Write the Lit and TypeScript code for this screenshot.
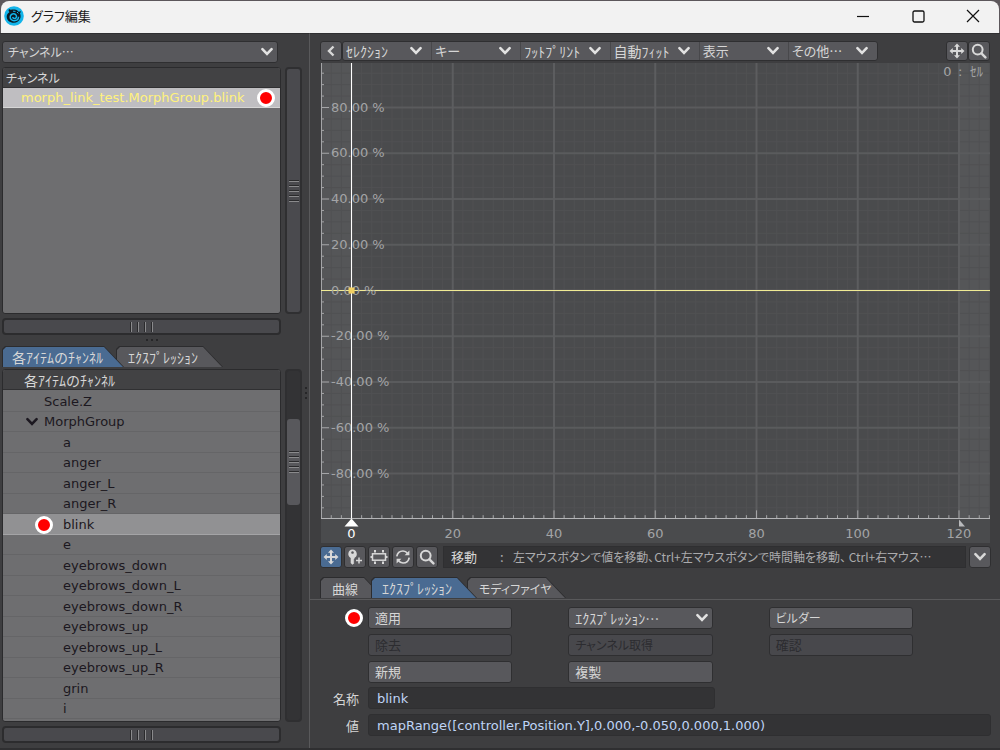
import { LitElement, html, svg, css } from "lit";
import { customElement, property } from "lit/decorators.js";

const chevron = html`<svg class="chev" viewBox="0 0 14 10" width="14" height="10" aria-hidden="true">
  <path d="M2.4 2.2 L7 6.8 L11.6 2.2" fill="none" stroke="currentColor" stroke-width="2.6" stroke-linecap="round"/></svg>`;

const moveIcon = html`<svg viewBox="0 0 16 16" width="16" height="16" aria-hidden="true">
  <path d="M8 0.5 L11 3.8 H5Z M8 15.5 L11 12.2 H5Z M0.5 8 L3.8 5 V11Z M15.5 8 L12.2 5 V11Z" fill="currentColor"/>
  <path d="M8 3V13M3 8H13" stroke="currentColor" stroke-width="2" fill="none"/></svg>`;

const searchIcon = html`<svg viewBox="0 0 16 16" width="16" height="16" aria-hidden="true">
  <circle cx="6.7" cy="6.6" r="4.9" fill="none" stroke="currentColor" stroke-width="2"/>
  <path d="M10.4 10.4L14.4 14.4" stroke="currentColor" stroke-width="2.4" stroke-linecap="round"/></svg>`;

const keyIcon = html`<svg viewBox="0 0 16 16" width="16" height="16" aria-hidden="true">
  <path fill-rule="evenodd" fill="currentColor" d="M5.5 0.6a4.4 4.4 0 0 1 1.9 8.3V10l-1 1 1 1-1 1.1 1 1-2 1.6-1.7-1.7V8.9A4.4 4.4 0 0 1 5.5 .6ZM5.5 2.2a1.3 1.3 0 1 0 .01 0Z"/>
  <path d="M12 8.6V14.6M9 11.6H15" stroke="currentColor" stroke-width="1.5"/></svg>`;

const stretchIcon = html`<svg viewBox="0 0 18 16" width="18" height="16" aria-hidden="true">
  <rect x="2.500" y="4.8" width="13" height="6.4" fill="none" stroke="currentColor" stroke-width="1.5"/>
  <path d="M5 1V3.500M13 1V3.500M5 12.500V15M13 12.500V15M0.5 8H2M16 8H17.5" stroke="currentColor" stroke-width="2"/></svg>`;

const cycleIcon = html`<svg viewBox="0 0 16 16" width="16" height="16" aria-hidden="true">
  <path d="M1.8 7.4C2.4 3.6 5.4 2 8 2c2 0 3.6 1 4.6 2.4M14.2 8.6C13.6 12.4 10.6 14 8 14c-2 0-3.6-1-4.6-2.4" fill="none" stroke="currentColor" stroke-width="1.7"/>
  <path d="M14.4 1.400V6.2H9.6Z M1.6 14.600V9.8H6.4Z" fill="currentColor"/></svg>`;

const logo = html`<svg viewBox="0 0 20 20" width="20" height="20" aria-hidden="true">
  <circle cx="10" cy="10" r="9.8" fill="#12b4ea"/>
  <path d="M5 3C6.500 4.300 8 3.300 10.500 3.500c2.200.2 3.200.9 4.200 2.300l2.300-.5-1 2.200c.8 1.800.7 3.200.4 4.400-1 3.200-3.600 4.800-6.600 4.800-3.900 0-7-2.300-7.100-6C2.700 8.800 3.800 7.100 5.600 6 4.500 5.600 4.300 4.400 5 3Z" fill="#0b1822"/>
  <path d="M14.600 10.800c-.2 2.600-2.300 4-4.600 3.900-2.300-.1-3.900-1.700-3.800-3.700.1-2 1.700-3.300 3.500-3.200 1.700.1 2.900 1.300 2.800 2.800-.1 1.200-1.100 2.100-2.200 2-1-.1-1.500-.8-1.400-1.600" fill="none" stroke="#12b4ea" stroke-width="1.500"/>
  <path d="M9 5.200L11.500 5.400M13 6L14.400 7.400" stroke="#12b4ea" stroke-width="1"/></svg>`;

/** Drop-down with a flat face and a bold chevron. */
@customElement("menu-select")
class MenuSelect extends LitElement {
  @property() label = "";
  static styles = css`
    :host { display: block; position: relative; min-width: 0; }
    select {
      appearance: none; display: block; width: 100%; height: 100%; margin: 0; padding: 0 18px 0 var(--pad, 5px); border: 0;
      background: transparent; color: #d6d6d6; font: inherit; font-feature-settings: inherit; border-radius: 3px;
    }
    .chev { position: absolute; right: var(--chev, 3px); top: 50%; margin-top: -5px; color: #e2e2e2; pointer-events: none; }
  `;
  render() {
    return html`<select aria-label=${this.label}><option>${this.label}</option></select>${chevron}`;
  }
}

/** Curve plot; every coordinate is a share of the drawing area. */
@customElement("curve-graph")
class CurveGraph extends LitElement {
  static styles = css`
    :host { display: block; min-height: 0; background: #4a4b4d; }
    svg { display: block; width: 100%; height: 100%; overflow: visible; }
    text { font: 13px "DejaVu Sans", sans-serif; fill: #a3a4a6; }
    .now { fill: #fff; }
    .jp { font-family: "Noto Sans CJK JP", sans-serif; }
    .mid { text-anchor: middle; }
  `;
  private x(v: number) { return `${((30.5 + v * 5.0625) / 669) * 100}%`; }
  private y(v: number) { return `${((227.5 - v * 2.2875) / 480) * 100}%`; }
  render() {
    const bottom = `${(455.5 / 480) * 100}%`;
    const frames = Array.from({ length: 66 }, (_, i) => -4 + i * 2);
    const levels = Array.from({ length: 39 }, (_, i) => -95 + i * 5);
    const line = (x1: string, y1: string, x2: string, y2: string, c: string, w = 1) =>
      svg`<line x1=${x1} y1=${y1} x2=${x2} y2=${y2} stroke=${c} stroke-width=${w}></line>`;
    return html`<svg role="img" aria-label="graph">
      <rect x="0" y="0" width=${this.x(0)} height=${bottom} fill="#555658"></rect>
      <rect x=${this.x(120)} y="0" width=${`${(31 / 669) * 100}%`} height=${bottom} fill="#555658"></rect>
      ${frames.filter(f => f % 20).map(f => line(this.x(f), "0", this.x(f), bottom, "#505153"))}
      ${levels.filter(l => l % 20).map(l => line("0", this.y(l), "100%", this.y(l), "#505153"))}
      ${levels.filter(l => l % 20 === 0).map(l => line("0", this.y(l), "100%", this.y(l), "#5a5b5d", 2))}
      ${frames.filter(f => f % 20 === 0).map(f => line(this.x(f), "0", this.x(f), bottom, "#5c5d5f", 2))}
      ${levels.map(l => line("0", this.y(l), l % 20 ? "3" : "8", this.y(l), "#a4a5a7"))}
      ${frames.map(f => line(this.x(f), f % 20 ? "94.2%" : "93.2%", this.x(f), bottom, "#a4a5a7"))}
      ${line("0.5", "0", "0.5", bottom, "#a4a5a7")}
      ${line("0", bottom, "100%", bottom, "#b4b5b7")}
      ${line("0", this.y(0), "100%", this.y(0), "#f0eb94", 1)}
      ${levels.filter(l => l % 20 === 0).map(l => svg`<text x="10" y=${this.y(l)} dy="4">${l.toFixed(2)} %</text>`)}
      ${line(this.x(0), "0", this.x(0), bottom, "#ffffff")}
      <svg x=${this.x(0)} y=${this.y(0)}><rect x="-3" y="-3" width="6" height="6" fill="#f0cf62"></rect></svg>
      <svg x=${this.x(0)} y=${bottom}><path d="M0 0L7 8H-7Z" fill="#fff"></path></svg>
      <svg x=${this.x(120)} y=${bottom}><path d="M0 1L6 8H0Z" fill="#b9babc"></path></svg>
      ${frames.filter(f => f % 20 === 0).map(f =>
        svg`<text class=${f ? "mid" : "mid now"} x=${this.x(f)} y="99%">${f}</text>`)}
      <text x="93%" y="13">0</text>
      <text x="95.200%" y="13">:</text>
      <text class="jp" x="97%" y="13">ｾﾙ</text>
    </svg>`;
  }
}

const items = ["Scale.Z", "MorphGroup", "a", "anger", "anger_L", "anger_R", "blink", "e", "eyebrows_down", "eyebrows_down_L",
  "eyebrows_down_R", "eyebrows_up", "eyebrows_up_L", "eyebrows_up_R", "grin", "i"];

@customElement("app-root")
class AppRoot extends LitElement {
  static styles = css`
    * { box-sizing: border-box; }
    :host {
      display: flex; flex-direction: column; height: 100vh; min-height: 600px; overflow: hidden;
      background: #3e3e40; color: #d6d6d6; font: 13px/16px "DejaVu Sans", "Noto Sans CJK JP", sans-serif;
    }
    button, input { font: inherit; color: inherit; margin: 0; }
    .jp { font-family: "Noto Sans CJK JP", sans-serif; font-size: 13px; font-feature-settings: "palt"; }
    .half { font-family: "Noto Sans CJK JP", sans-serif; font-size: 14px; }
    .kana { font-size: 12px; }
    .title { flex: none; height: 33px; padding: 1px 1px 0; background: #5c575b; }
    .bar { display: flex; align-items: center; height: 32px; padding: 0 12px 2px 3px; gap: 7px; background: #f2f2f2; color: #1b1b1b; border-radius: 8px 8px 0 0; }
    .bar h1 { flex: 1; margin: 0; line-height: 20px; font-weight: 400; }
    .win { display: flex; gap: 27px; }
    .win button { width: 28px; height: 28px; padding: 0; border: 0; background: none; display: grid; place-items: center; }
    .main { flex: 1; min-height: 0; display: grid; grid-template-columns: 31fr 69fr; border-bottom: 2px solid #2f2f31; }
    .left { display: flex; flex-direction: column; min-width: 0; min-height: 0; padding: 7px 7px 5px 2px; border-right: 1px solid #59595b; border-top: 1px solid #303032; }
    .face { background: #58585c; border: 1px solid #2f2f31; border-radius: 3px; }
    .chan { flex: none; height: 22px; margin: 0 24px 4px 0; }
    .split { display: grid; grid-template-columns: minmax(0, 1fr) 17px; gap: 4px; }
    .top { flex: 247 1 0; min-height: 0; }
    .bottom { flex: 353 1 0; min-height: 0; position: relative; }
    .list { display: flex; flex-direction: column; margin: 0; border: 1px solid #2b2b2d; border-radius: 3px; background: #6e6e70; overflow: hidden; }
    .head { flex: none; height: 20px; line-height: 20px; padding: 0 3px; background: #424244; border-bottom: 1px solid #303032; overflow: hidden; }
    .tree .head { padding: 0 21px; }
    .pick { flex: none; display: flex; align-items: center; justify-content: space-between; height: 20px; padding: 1px 5px 0 18px; background: #bfbec1; color: #fff27c; border-bottom: 1px solid #d6d6d6; }
    .dot { display: block; flex: none; width: 18px; height: 18px; margin: -1px 0; border-radius: 50%; background: #f00; border: 3px solid #fff; }
    .track { position: relative; display: grid; place-items: center; border: 2px solid #2f2f31; border-radius: 4px; background: #4a4a4e; }
    .hbar { flex: none; height: 17px; margin: 4px 21px 0 0; border: 2px solid #2c2c2e; border-radius: 4px; background: #49494d; display: grid; place-items: center; }
    .grip { width: 23px; height: 10px; background: repeating-linear-gradient(90deg, #2a2a2c 0 1px, #8a8a8c 1px 2px, transparent 2px 7px); }
    .vgrip { width: 10px; height: 22px; background: repeating-linear-gradient(#2a2a2c 0 1px, #8a8a8c 1px 2px, transparent 2px 5px); }
    .dark { display: flex; flex-direction: column; background: #333335; }
    .before { flex: 48; }
    .thumb { flex: 86; width: 100%; display: grid; place-items: center; background: #58585c; border-radius: 3px; }
    .after { flex: 214; }
    .dots { flex: none; width: 12px; height: 2px; margin: 4px auto 5px; background: repeating-linear-gradient(90deg, #262628 0 2px, transparent 2px 5px); }
    .vdots { position: absolute; right: -5px; top: 18px; width: 2px; height: 12px; background: repeating-linear-gradient(#262628 0 2px, transparent 2px 5px); }
    .tabs { display: flex; flex: none; height: 21px; margin-bottom: 1px; }
    .ltabs { margin-bottom: 2px; }
    .tab { position: relative; height: 21px; padding: 0 20px 0 10px; border: 0; background: none; text-align: left; white-space: nowrap; }
    .tab span { position: relative; display: block; line-height: 21px; padding-top: 1px; }
    .slant { position: absolute; inset: 0; clip-path: polygon(0 3px, 3px 0, calc(100% - 20px) 0, 100% 100%, 0 100%); background: #2c2c2e; }
    .slant::after { content: ""; position: absolute; inset: 1px 1px 0 1px; clip-path: polygon(0 3px, 3px 0, calc(100% - 19px) 0, 100% 100%, 0 100%); background: #58585c; }
    .on { z-index: 1; }
    .on .slant::after { background: #4a6b92; }
    .ltab1 { width: 122px; }
    .ltab2 { width: 107px; margin-left: -8px; padding-left: 12px; }
    .tree { color: #1c1820; }
    .tree .head { color: #d6d6d6; }
    .rows { flex: 1; min-height: 0; display: flex; flex-direction: column; margin: 0; padding: 1px 0 2px; list-style: none; }
    .row { flex: 1; min-height: 0; display: flex; align-items: center; padding: 2px 0 0 60px; border-bottom: 1px solid #656567; }
    .up { padding-left: 41px; }
    .group { padding-left: 22px; gap: 5px; }
    .sel { background: #919193; border-color: #a4a4a6; padding-left: 32px; gap: 10px; }
    .right { display: flex; flex-direction: column; min-width: 0; min-height: 0; border-top: 1px solid #303032; }
    .tools { display: flex; flex: none; height: 20px; margin: 7px 10px 2px; }
    .icon { display: grid; place-items: center; flex: none; width: 22px; height: 22px; padding: 0; background: #58585c; border: 1px solid #2f2f31; border-radius: 3px; color: #d8d8d8; }
    .tools .icon { height: 20px; }
    .menus { display: flex; flex: 0 1 536px; min-width: 0; --pad: 3px; --chev: 8px; }
    .menus menu-select { flex: 1; border-right: 1px solid #48484b; }
    .menus menu-select:last-child { border: 0; }
    .space { flex: 1; }
    .graph { flex: 1; margin: 0 10px 0 11px; min-height: 0; }
    .status { display: flex; flex: none; gap: 2px; height: 22px; margin: 3px 9px 9px 10px; }
    .blue { background: #4a6b92; }
    .msg { flex: 1; min-width: 0; display: flex; margin: 0 1px 0 3px; padding: 0 2px 0 7px; background: #333335; border: 1px solid #2f2f31; line-height: 20px; color: #ababad; }
    .msg b { font-weight: 400; color: #d6d6d6; flex: 0 0 49px; }
    .msg i { font-style: normal; flex: 0 0 13px; }
    .msg span { white-space: nowrap; }
    .rtabs { margin-left: 10px; }
    .rt1 { width: 64px; padding-left: 12px; }
    .rt2 { width: 106px; margin-left: -13px; padding-left: 11px; }
    .rt3 { width: 99px; margin-left: -10px; padding-left: 12px; }
    .form { flex: none; height: 149px; margin: 0; padding: 7px 9px 12px 0; border-top: 1px solid #59595b;
      display: grid; grid-template-columns: 58px repeat(3, minmax(0, 200fr)) minmax(0, 22fr); grid-auto-rows: 22px; align-content: space-between; }
    .btn { width: 72%; height: 22px; padding: 0 6px; text-align: left; line-height: 20px; }
    menu-select.btn { padding: 0; --pad: 6px; }
    .btn:disabled { background: #48484c; color: #2c2c30; }
    .c1 { grid-column: 2; } .c2 { grid-column: 3; } .c3 { grid-column: 4; }
    .mark { display: grid; place-items: center end; padding-right: 5px; }
    label { grid-column: 1; text-align: right; padding-right: 9px; line-height: 24px; }
    .field { height: 22px; padding: 1px 8px 0; background: #333335; border: 1px solid #2f2f31; border-radius: 3px; color: #bfd4f6; min-width: 0; }
    .name { grid-column: 2 / 4; width: 86.5%; }
    .value { grid-column: 2 / 6; width: 100%; }
  `;

  render() {
    return html`
      <header class="title"><div class="bar">
        ${logo}<h1 class="jp">グラフ編集</h1>
        <div class="win">
          <button aria-label="最小化"><svg width="12" height="12"><path d="M0 6.500H12" stroke="#111" stroke-width="1.200"/></svg></button>
          <button aria-label="最大化"><svg width="13" height="13"><rect x="1" y="1" width="11" height="11" rx="1.500" fill="none" stroke="#111" stroke-width="1.300"/></svg></button>
          <button aria-label="閉じる"><svg width="14" height="14"><path d="M1 1L13 13M13 1L1 13" stroke="#111" stroke-width="1.200"/></svg></button>
        </div></div></header>
      <main class="main">
        <section class="left">
          <menu-select class="face chan jp kana" label="チャンネル…"></menu-select>
          <div class="split top">
            <div class="list">
              <div class="head jp kana">チャンネル</div>
              <div class="pick">morph_link_test.MorphGroup.blink<span class="dot"></span></div>
            </div>
            <div class="track"><div class="vgrip"></div></div>
          </div>
          <div class="hbar"><div class="grip"></div></div>
          <div class="dots"></div>
          <div class="tabs ltabs">
            <button class="tab on ltab1"><div class="slant"></div><span class="half">各ｱｲﾃﾑのﾁｬﾝﾈﾙ</span></button>
            <button class="tab ltab2"><div class="slant"></div><span class="half">ｴｸｽﾌﾟﾚｯｼｮﾝ</span></button>
          </div>
          <div class="split bottom">
            <div class="list tree">
              <div class="head half">各ｱｲﾃﾑのﾁｬﾝﾈﾙ</div>
              <ul class="rows">${items.map((t, i) => html`
                <li class="row ${i === 0 ? "up" : i === 1 ? "group" : t === "blink" ? "sel" : ""}">${i === 1 ? chevron : t === "blink" ? html`<span class="dot"></span>` : ""}${t}</li>`)}</ul>
            </div>
            <div class="track dark"><div class="before"></div><div class="thumb"><div class="vgrip"></div></div><div class="after"></div></div>
            <div class="vdots"></div>
          </div>
          <div class="hbar"><div class="grip"></div></div>
        </section>
        <section class="right">
          <div class="tools">
            <button class="icon" aria-label="戻る"><svg width="10" height="12" viewBox="0 0 10 12"><path d="M7.500 1.500L3 6L7.500 10.500" fill="none" stroke="currentColor" stroke-width="2.400"/></svg></button>
            <div class="menus face half">${["ｾﾚｸｼｮﾝ", "キー", "ﾌｯﾄﾌﾟﾘﾝﾄ", "自動ﾌｨｯﾄ", "表示", "その他…"].map(m =>
              html`<menu-select class=${/^[キ表そ]/.test(m) ? "jp" : ""} label=${m}></menu-select>`)}</div>
            <div class="space"></div>
            <button class="icon" aria-label="移動">${moveIcon}</button>
            <button class="icon" aria-label="ズーム">${searchIcon}</button>
          </div>
          <curve-graph class="graph"></curve-graph>
          <div class="status">
            <button class="icon blue" aria-label="移動">${moveIcon}</button>
            <button class="icon" aria-label="キー追加">${keyIcon}</button>
            <button class="icon" aria-label="伸縮">${stretchIcon}</button>
            <button class="icon" aria-label="回転">${cycleIcon}</button>
            <button class="icon" aria-label="ズーム">${searchIcon}</button>
            <div class="msg jp"><b>移動</b><i>:</i><span class="kana">左マウスボタンで値を移動、Ctrl+左マウスボタンで時間軸を移動、 Ctrl+右マウス…</span></div>
            <button class="icon" aria-label="履歴">${chevron}</button>
          </div>
          <div class="tabs rtabs">
            <button class="tab rt1"><div class="slant"></div><span class="jp">曲線</span></button>
            <button class="tab on rt2"><div class="slant"></div><span class="half">ｴｸｽﾌﾟﾚｯｼｮﾝ</span></button>
            <button class="tab rt3"><div class="slant"></div><span class="jp kana">モディファイヤ</span></button>
          </div>
          <form class="form" @submit=${(e: Event) => e.preventDefault()}>
            <div class="mark"><span class="dot"></span></div>
            <button class="face btn jp c1">適用</button>
            <menu-select class="face btn c2 half" label="ｴｸｽﾌﾟﾚｯｼｮﾝ…"></menu-select>
            <button class="face btn jp kana c3">ビルダー</button>
            <button class="face btn jp c1" disabled>除去</button>
            <button class="face btn jp kana c2" disabled>チャンネル取得</button>
            <button class="face btn jp c3" disabled>確認</button>
            <button class="face btn jp c1">新規</button>
            <button class="face btn jp c2">複製</button>
            <label class="jp" for="name">名称</label>
            <input class="field name" id="name" value="blink">
            <label class="jp" for="value">値</label>
            <input class="field value" id="value" value="mapRange([controller.Position.Y],0.000,-0.050,0.000,1.000)">
          </form>
        </section>
      </main>`;
  }
}
